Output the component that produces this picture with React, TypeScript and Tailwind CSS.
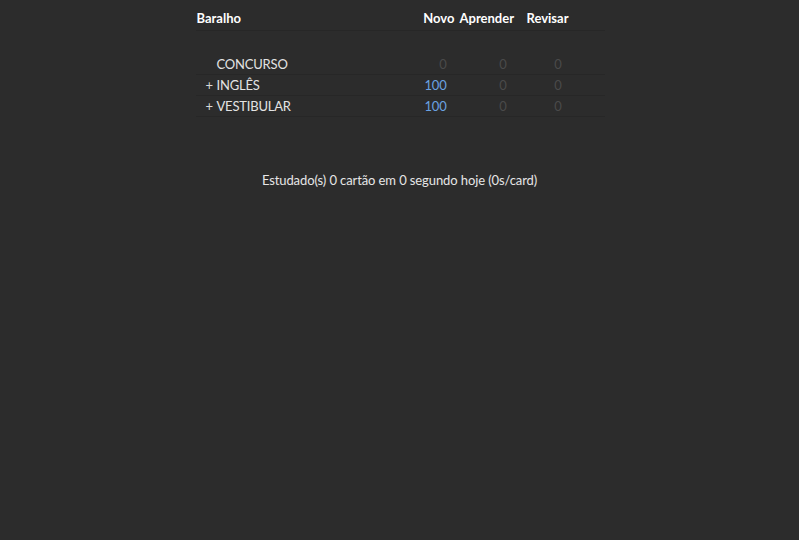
export default function App() {
  const decks = [
    { name: 'CONCURSO', collapse: '', novo: 0, aprender: 0, revisar: 0 },
    { name: 'INGLÊS', collapse: '+', novo: 100, aprender: 0, revisar: 0 },
    { name: 'VESTIBULAR', collapse: '+', novo: 100, aprender: 0, revisar: 0 },
  ];

  const count = (n: number) => (n > 0 ? 'text-[#6aa2e2]' : 'text-[#4a4a4a]');

  return (
    <div
      className="min-h-[540px] w-full bg-[#2c2c2c] text-[13px] leading-[17px] text-[#e3e3e3]"
      style={{ fontFamily: 'Lato, "Open Sans", sans-serif' }}
    >
      <div className="mx-auto w-[410px] pl-[1px]">
        {/* Header */}
        <div className="flex h-[31px] items-end border-b border-[#272727] pb-[3px] font-bold text-white">
          <div className="flex-1 pl-[1px]">Baralho</div>
          <div className="w-[37px] text-right pr-[2px]">Novo</div>
          <div className="w-[61px] pl-[3px]">Aprender</div>
          <div className="w-[54px] pl-[9px]">Revisar</div>
          <div className="w-[33px]" />
        </div>

        {/* spacer row */}
        <div className="h-[23px]" />

        {decks.map((d) => (
          <div key={d.name} className="flex h-[21px] items-center border-b border-[#272727] tracking-[-0.2px]">
            <div className="flex flex-1 items-center">
              <span className="w-[21px] pl-[10px] text-[#d8d8d8]">{d.collapse}</span>
              <span>{d.name}</span>
            </div>
            <div className={`w-[37px] pr-[10px] text-right ${count(d.novo)}`}>{d.novo}</div>
            <div className={`w-[61px] pr-[11px] text-right ${count(d.aprender)}`}>{d.aprender}</div>
            <div className={`w-[54px] pr-[10px] text-right ${count(d.revisar)}`}>{d.revisar}</div>
            <div className="w-[33px]" />
          </div>
        ))}
      </div>

      <p className="mt-[55px] text-center tracking-[-0.1px] text-[#e6e6e6]">
        Estudado(s) 0 cartão em 0 segundo hoje (0s/card)
      </p>
    </div>
  );
}
